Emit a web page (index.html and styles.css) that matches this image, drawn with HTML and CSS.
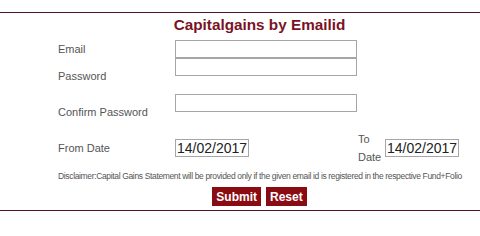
FILE: index.html
```html
<!DOCTYPE html>
<html>
<head>
<meta charset="utf-8">
<link rel="stylesheet" href="styles.css">
</head>
<body>
<div class="panel">
  <div class="inner">
    <h1 class="title">Capitalgains by Emailid</h1>
    <div class="row row-short">
      <label class="lbl">Email</label>
      <input class="field wide" type="text">
    </div>
    <div class="row row-tall">
      <label class="lbl">Password</label>
      <input class="field wide top" type="password">
    </div>
    <div class="row row-tall">
      <label class="lbl">Confirm Password</label>
      <input class="field wide top" type="password">
    </div>
    <div class="row row-date">
      <label class="lbl">From Date</label>
      <input class="field date" type="text" value="14/02/2017">
      <span class="spacer"></span>
      <label class="to">To Date</label>
      <input class="field date" type="text" value="14/02/2017">
    </div>
    <p class="disclaimer">Disclaimer:Capital Gains Statement will be provided only if the given email id is registered in the respective Fund+Folio</p>
    <div class="actions">
      <button class="btn" type="button">Submit</button>
      <button class="btn" type="button">Reset</button>
    </div>
  </div>
</div>
</body>
</html>
```
FILE: styles.css
```css
html, body {
  margin: 0;
  padding: 0;
  background: #ffffff;
}
body {
  font-family: "Liberation Sans", Arial, sans-serif;
  color: #555555;
}
.panel {
  margin-top: 12px;
  border-top: 1px solid #4e1626;
  border-bottom: 1px solid #4e1626;
}
.inner {
  margin-left: 58px;
  width: 403px;
  padding-top: 3px;
  padding-bottom: 4px;
}
.title {
  margin: 0 0 6px 0;
  font-size: 15.3px;
  line-height: 18px;
  font-weight: bold;
  color: #7a1226;
  text-align: center;
}
.row {
  display: flex;
  align-items: center;
}
.row-short { height: 18px; }
.row-tall { height: 36px; }
.row-date { height: 36px; }
.lbl {
  width: 117px;
  flex: none;
  font-size: 11px;
  color: #555555;
}
.field {
  box-sizing: border-box;
  height: 18px;
  border: 1px solid #a6a6a6;
  background: #fff;
  margin: 0;
  padding: 0 0 0 1px;
  font-family: "Liberation Sans", Arial, sans-serif;
  font-size: 14px;
  color: #222222;
  outline: none;
}
.wide { width: 182px; }
.top { align-self: flex-start; }
.date { width: 74px; }
.spacer {
  width: 109px;
  flex: none;
}
.to {
  width: 27px;
  flex: none;
  font-size: 11px;
  line-height: 18px;
  color: #555555;
}
.disclaimer {
  margin: 0;
  height: 20px;
  line-height: 20px;
  font-size: 8.5px;
  letter-spacing: -0.35px;
  color: #555555;
  white-space: nowrap;
}
.actions {
  display: flex;
  justify-content: center;
  gap: 5px;
  margin-top: 1px;
}
.btn {
  height: 19px;
  padding: 0 4px;
  border: none;
  background: #8a0b12;
  color: #ffffff;
  font-family: "Liberation Sans", Arial, sans-serif;
  font-size: 12px;
  font-weight: bold;
}
```
